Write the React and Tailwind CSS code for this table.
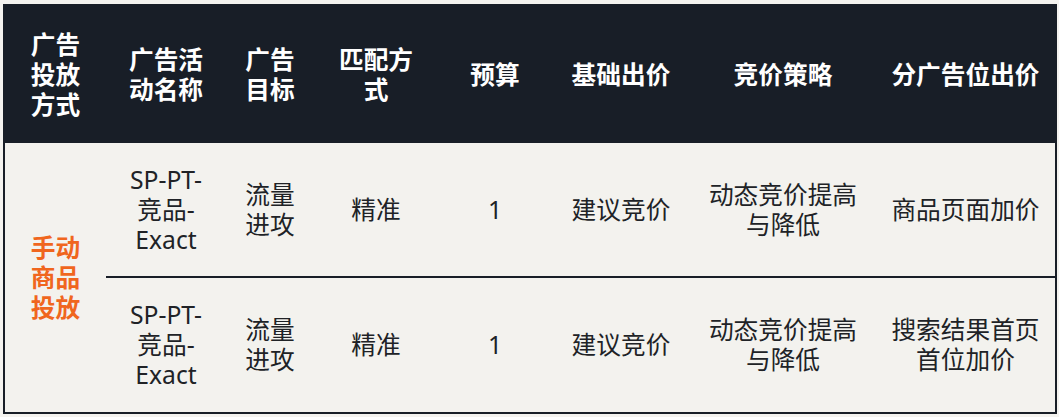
import React from 'react';

const font = { fontFamily: '"Noto Sans", "Noto Sans CJK SC", sans-serif' };

const headers = [
  ['广告', '投放', '方式'],
  ['广告活', '动名称'],
  ['广告', '目标'],
  ['匹配方', '式'],
  ['预算'],
  ['基础出价'],
  ['竞价策略'],
  ['分广告位出价'],
];

const rows = [
  [['SP-PT-', '竞品-', 'Exact'], ['流量', '进攻'], ['精准'], ['1'], ['建议竞价'], ['动态竞价提高', '与降低'], ['商品页面加价']],
  [['SP-PT-', '竞品-', 'Exact'], ['流量', '进攻'], ['精准'], ['1'], ['建议竞价'], ['动态竞价提高', '与降低'], ['搜索结果首页', '首位加价']],
];

function Lines({ lines }) {
  return lines.map((l, i) => (
    <span key={i} className="block">
      {l}
    </span>
  ));
}

export default function App() {
  return (
    <div className="w-[1059px] h-[417px] bg-[#f4f3ef] pt-[4px] pl-[3px]" style={font}>
      <div className="w-[1054px] h-[410px] border-2 border-[#181e27] bg-[#f3f2ee]">
        <div className="grid grid-cols-[101px_120px_88px_124px_114px_138px_186px_179px] grid-rows-[137px_133px_2px_134px] text-[24.7px] leading-[30px] text-center">
          {headers.map((h, i) => (
            <div key={i} className="bg-[#181e27] text-white font-bold flex flex-col items-center justify-center">
              <Lines lines={h} />
            </div>
          ))}

          <div className="row-span-3 flex flex-col items-center justify-center text-[#f0661e] font-bold">
            <Lines lines={['手动', '商品', '投放']} />
          </div>

          {rows[0].map((c, i) => (
            <div key={i} className="flex flex-col items-center justify-center text-[#202226]">
              <Lines lines={c} />
            </div>
          ))}

          <div className="col-span-7 bg-[#181e27]" />

          {rows[1].map((c, i) => (
            <div key={i} className="flex flex-col items-center justify-center text-[#202226]">
              <Lines lines={c} />
            </div>
          ))}
        </div>
      </div>
    </div>
  );
}
